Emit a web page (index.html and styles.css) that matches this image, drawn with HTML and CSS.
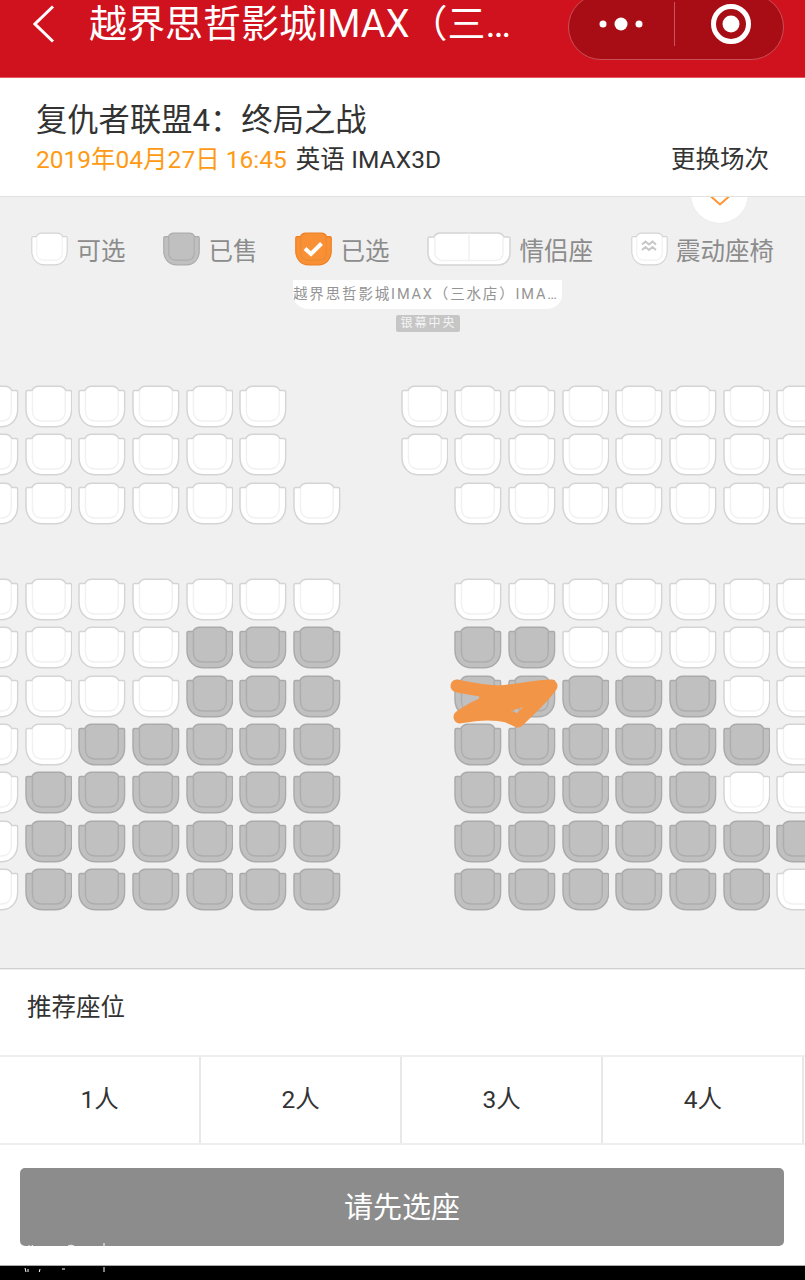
FILE: index.html
```html
<!DOCTYPE html>
<html lang="zh">
<head>
<meta charset="utf-8">
<title>选座</title>
<link rel="stylesheet" href="styles.css">
</head>
<body>
<svg class="defs" aria-hidden="true">
  <symbol id="s" viewBox="0 0 48 43">
    <path class="o" d="M2.5 5.5H7C8 2.8 10 1 14 1H34C38 1 40 2.8 41 5.5H45.5Q47 5.5 47 7V24C47 35 40 42 30 42H18C8 42 1 35 1 24V7Q1 5.5 2.5 5.5Z"/>
    <path class="n" d="M7.5 6V26C7.5 32 11 36 17 36H31C37 36 40.5 32 40.5 26V6"/>
  </symbol>
  <symbol id="c" viewBox="0 0 84 34">
    <path class="o" d="M2.5 5H7C8 2.5 10 1 14 1H70C74 1 76 2.5 77 5H81.5Q83 5 83 6.500V21C83 28 78 33 71 33H13C6 33 1 28 1 21V6.500Q1 5 2.500 5Z"/>
    <path class="n" d="M8 6V21C8 25 11 28.500 15 28.500H69C73 28.500 76 25 76 21V6M42 1V28.500"/>
  </symbol>
</svg>

<div class="page">
  <header class="bar">
    <svg class="back" viewBox="0 0 22 38"><path d="M20 1.500 2 19l18 17.500"/></svg>
    <h1 class="bar-title">越界思哲影城IMAX（三…</h1>
    <div class="capsule">
      <div class="cap-cell">
        <svg class="dots" viewBox="0 0 44 14"><circle cx="4" cy="7" r="3.500"/><circle cx="22" cy="7" r="6.500"/><circle cx="40" cy="7" r="3.500"/></svg>
      </div>
      <div class="cap-cell cap-right">
        <svg class="target" viewBox="0 0 40 40"><circle class="ring" cx="20" cy="20" r="17.500"/><circle class="bull" cx="20" cy="20" r="8.500"/></svg>
      </div>
    </div>
  </header>

  <section class="info">
    <h2 class="movie">复仇者联盟4：终局之战</h2>
    <div class="meta">
      <p class="meta-text"><span class="time">2019年04月27日 16:45</span><span class="lang">英语 IMAX3D</span></p>
      <span class="change">更换场次</span>
    </div>
  </section>

  <main class="hall">
    <div class="tab"><svg class="tab-arrow" viewBox="0 0 22 11"><path d="M1.500 1 11 9.500 20.500 1"/></svg></div>
    <div class="legend">
      <div class="lg"><svg class="lg-icon w"><use href="#s"/></svg>可选</div>
      <div class="lg"><svg class="lg-icon g"><use href="#s"/></svg>已售</div>
      <div class="lg"><svg class="lg-icon p"><use href="#s"/><path class="tick" d="M10 16.500 16 22 26.500 11.500"/></svg>已选</div>
      <div class="lg"><svg class="lg-wide w"><use href="#c"/></svg>情侣座</div>
      <div class="lg lg-last"><svg class="lg-icon w"><use href="#s"/><path class="wave" d="M11 12.500l3.500-3 3.500 3 3.500-3 3.500 3M11 18l3.500-3 3.500 3 3.500-3 3.500 3"/></svg>震动座椅</div>
    </div>
    <div class="screen">越界思哲影城IMAX（三水店）IMA…</div>
    <div class="center"><span class="center-tag">银幕中央</span></div>

    <div class="map">
      <div class="row"><svg class="seat w"><use href="#s"/></svg><svg class="seat w"><use href="#s"/></svg><svg class="seat w"><use href="#s"/></svg><svg class="seat w"><use href="#s"/></svg><svg class="seat w"><use href="#s"/></svg><svg class="seat w"><use href="#s"/></svg><i class="seat"></i><i class="seat"></i><svg class="seat w"><use href="#s"/></svg><svg class="seat w"><use href="#s"/></svg><svg class="seat w"><use href="#s"/></svg><svg class="seat w"><use href="#s"/></svg><svg class="seat w"><use href="#s"/></svg><svg class="seat w"><use href="#s"/></svg><svg class="seat w"><use href="#s"/></svg><svg class="seat w"><use href="#s"/></svg></div>
      <div class="row"><svg class="seat w"><use href="#s"/></svg><svg class="seat w"><use href="#s"/></svg><svg class="seat w"><use href="#s"/></svg><svg class="seat w"><use href="#s"/></svg><svg class="seat w"><use href="#s"/></svg><svg class="seat w"><use href="#s"/></svg><i class="seat"></i><i class="seat"></i><svg class="seat w"><use href="#s"/></svg><svg class="seat w"><use href="#s"/></svg><svg class="seat w"><use href="#s"/></svg><svg class="seat w"><use href="#s"/></svg><svg class="seat w"><use href="#s"/></svg><svg class="seat w"><use href="#s"/></svg><svg class="seat w"><use href="#s"/></svg><svg class="seat w"><use href="#s"/></svg></div>
      <div class="row"><svg class="seat w"><use href="#s"/></svg><svg class="seat w"><use href="#s"/></svg><svg class="seat w"><use href="#s"/></svg><svg class="seat w"><use href="#s"/></svg><svg class="seat w"><use href="#s"/></svg><svg class="seat w"><use href="#s"/></svg><svg class="seat w"><use href="#s"/></svg><i class="seat"></i><i class="seat"></i><svg class="seat w"><use href="#s"/></svg><svg class="seat w"><use href="#s"/></svg><svg class="seat w"><use href="#s"/></svg><svg class="seat w"><use href="#s"/></svg><svg class="seat w"><use href="#s"/></svg><svg class="seat w"><use href="#s"/></svg><svg class="seat w"><use href="#s"/></svg></div>
      <div class="row"></div>
      <div class="row"><svg class="seat w"><use href="#s"/></svg><svg class="seat w"><use href="#s"/></svg><svg class="seat w"><use href="#s"/></svg><svg class="seat w"><use href="#s"/></svg><svg class="seat w"><use href="#s"/></svg><svg class="seat w"><use href="#s"/></svg><svg class="seat w"><use href="#s"/></svg><i class="seat"></i><i class="seat"></i><svg class="seat w"><use href="#s"/></svg><svg class="seat w"><use href="#s"/></svg><svg class="seat w"><use href="#s"/></svg><svg class="seat w"><use href="#s"/></svg><svg class="seat w"><use href="#s"/></svg><svg class="seat w"><use href="#s"/></svg><svg class="seat w"><use href="#s"/></svg></div>
      <div class="row"><svg class="seat w"><use href="#s"/></svg><svg class="seat w"><use href="#s"/></svg><svg class="seat w"><use href="#s"/></svg><svg class="seat w"><use href="#s"/></svg><svg class="seat g"><use href="#s"/></svg><svg class="seat g"><use href="#s"/></svg><svg class="seat g"><use href="#s"/></svg><i class="seat"></i><i class="seat"></i><svg class="seat g"><use href="#s"/></svg><svg class="seat g"><use href="#s"/></svg><svg class="seat w"><use href="#s"/></svg><svg class="seat w"><use href="#s"/></svg><svg class="seat w"><use href="#s"/></svg><svg class="seat w"><use href="#s"/></svg><svg class="seat w"><use href="#s"/></svg></div>
      <div class="row"><svg class="seat w"><use href="#s"/></svg><svg class="seat w"><use href="#s"/></svg><svg class="seat w"><use href="#s"/></svg><svg class="seat w"><use href="#s"/></svg><svg class="seat g"><use href="#s"/></svg><svg class="seat g"><use href="#s"/></svg><svg class="seat g"><use href="#s"/></svg><i class="seat"></i><i class="seat"></i><svg class="seat g"><use href="#s"/></svg><svg class="seat g"><use href="#s"/></svg><svg class="seat g"><use href="#s"/></svg><svg class="seat g"><use href="#s"/></svg><svg class="seat g"><use href="#s"/></svg><svg class="seat w"><use href="#s"/></svg><svg class="seat w"><use href="#s"/></svg></div>
      <div class="row"><svg class="seat w"><use href="#s"/></svg><svg class="seat w"><use href="#s"/></svg><svg class="seat g"><use href="#s"/></svg><svg class="seat g"><use href="#s"/></svg><svg class="seat g"><use href="#s"/></svg><svg class="seat g"><use href="#s"/></svg><svg class="seat g"><use href="#s"/></svg><i class="seat"></i><i class="seat"></i><svg class="seat g"><use href="#s"/></svg><svg class="seat g"><use href="#s"/></svg><svg class="seat g"><use href="#s"/></svg><svg class="seat g"><use href="#s"/></svg><svg class="seat g"><use href="#s"/></svg><svg class="seat g"><use href="#s"/></svg><svg class="seat w"><use href="#s"/></svg></div>
      <div class="row"><svg class="seat w"><use href="#s"/></svg><svg class="seat g"><use href="#s"/></svg><svg class="seat g"><use href="#s"/></svg><svg class="seat g"><use href="#s"/></svg><svg class="seat g"><use href="#s"/></svg><svg class="seat g"><use href="#s"/></svg><svg class="seat g"><use href="#s"/></svg><i class="seat"></i><i class="seat"></i><svg class="seat g"><use href="#s"/></svg><svg class="seat g"><use href="#s"/></svg><svg class="seat g"><use href="#s"/></svg><svg class="seat g"><use href="#s"/></svg><svg class="seat g"><use href="#s"/></svg><svg class="seat w"><use href="#s"/></svg><svg class="seat w"><use href="#s"/></svg></div>
      <div class="row"><svg class="seat w"><use href="#s"/></svg><svg class="seat g"><use href="#s"/></svg><svg class="seat g"><use href="#s"/></svg><svg class="seat g"><use href="#s"/></svg><svg class="seat g"><use href="#s"/></svg><svg class="seat g"><use href="#s"/></svg><svg class="seat g"><use href="#s"/></svg><i class="seat"></i><i class="seat"></i><svg class="seat g"><use href="#s"/></svg><svg class="seat g"><use href="#s"/></svg><svg class="seat g"><use href="#s"/></svg><svg class="seat g"><use href="#s"/></svg><svg class="seat g"><use href="#s"/></svg><svg class="seat g"><use href="#s"/></svg><svg class="seat g"><use href="#s"/></svg></div>
      <div class="row"><svg class="seat w"><use href="#s"/></svg><svg class="seat g"><use href="#s"/></svg><svg class="seat g"><use href="#s"/></svg><svg class="seat g"><use href="#s"/></svg><svg class="seat g"><use href="#s"/></svg><svg class="seat g"><use href="#s"/></svg><svg class="seat g"><use href="#s"/></svg><i class="seat"></i><i class="seat"></i><svg class="seat g"><use href="#s"/></svg><svg class="seat g"><use href="#s"/></svg><svg class="seat g"><use href="#s"/></svg><svg class="seat g"><use href="#s"/></svg><svg class="seat g"><use href="#s"/></svg><svg class="seat g"><use href="#s"/></svg><svg class="seat w"><use href="#s"/></svg></div>
    </div>
    <svg class="scribble" viewBox="0 0 120 60"><path class="scribble-fill" d="M32 16 100 12 80 30 60 36 32 33Z"/><path d="M10 10C30 14 50 17 62 15 78 13 92 10 104 10 96 22 84 32 71 45L60 40C44 36 28 38 13 41 22 34 34 28 50 22"/></svg>
  </main>

  <section class="rec">
    <div class="rec-head">推荐座位</div>
    <div class="rec-grid">
      <div class="rec-cell">1人</div>
      <div class="rec-cell">2人</div>
      <div class="rec-cell">3人</div>
      <div class="rec-cell">4人</div>
    </div>
  </section>

  <footer class="foot">
    <div class="cta">请先选座</div>
    <svg class="marks" viewBox="0 0 100 30"><path d="M9 3v3M12 3l2 4M48 4c2-1 4-1 6 0M84 1v6M5 26l1 4M8 27v3M20 27l-1 4M42 27h3M84 25v6"/></svg>
  </footer>
  <div class="nav"></div>
</div>
</body>
</html>
```
FILE: styles.css
```css
* { box-sizing: border-box; }
html, body { margin: 0; padding: 0; }
body {
  width: 805px;
  height: 1280px;
  overflow: hidden;
  background: #000;
  font-family: Roboto, "Noto Sans CJK SC", sans-serif;
  color: #333;
}
h1, h2, p { margin: 0; font-weight: 400; }
.defs { position: absolute; width: 0; height: 0; }

.page { display: flex; flex-direction: column; width: 805px; height: 1280px; overflow: hidden; }

.bar {
  flex: 0 0 78px;
  display: flex;
  align-items: flex-start;
  background: #d0111e;
  border-bottom: 1px solid #e8565f;
}
.back {
  flex: 0 0 22px;
  width: 22px;
  height: 38px;
  margin: 5px 0 0 33px;
  fill: none;
  stroke: #fff;
  stroke-width: 3;
}
.bar-title {
  margin-left: 34px;
  font-size: 38px;
  line-height: 48px;
  color: #fff;
  white-space: nowrap;
}
.capsule {
  display: flex;
  width: 216px;
  height: 66px;
  margin: -6px 21px 0 auto;
  background: #a80c14;
  border: 1px solid #c95058;
  border-radius: 34px;
}
.cap-cell { flex: 1; display: flex; align-items: center; justify-content: center; padding-bottom: 6px; }
.cap-right { position: relative; padding-left: 6px; }
.cap-right::before {
  content: "";
  position: absolute;
  left: 1px;
  top: 7px;
  bottom: 13px;
  width: 1px;
  background: #c9545b;
}
.dots { width: 44px; height: 14px; fill: #fff; }
.target { width: 40px; height: 40px; }
.ring { fill: none; stroke: #fff; stroke-width: 5; }
.bull { fill: #fff; }

.info {
  flex: 0 0 119px;
  padding: 23px 36px 0;
  background: #fff;
  border-bottom: 1px solid #e2e2e2;
}
.movie { font-size: 31.300px; line-height: 40px; color: #333; white-space: nowrap; }
.meta {
  display: flex;
  justify-content: space-between;
  align-items: center;
  font-size: 24.5px;
  line-height: 38px;
}
.time { color: #ff9a14; }
.lang { margin-left: 9px; letter-spacing: 0.1px; }

.hall {
  position: relative;
  flex: 0 0 771px;
  background: #f0f0f0;
  overflow: hidden;
}
.tab {
  position: absolute;
  left: 691px;
  top: -31px;
  width: 57px;
  height: 57px;
  display: flex;
  align-items: flex-end;
  justify-content: center;
  padding-bottom: 17px;
  background: #fff;
  border-radius: 50%;
  box-shadow: 0 0 1px #d8d8d8;
}
.tab-arrow { width: 22px; height: 11px; fill: none; stroke: #ff9431; stroke-width: 2; }

.legend {
  display: flex;
  padding: 35px 0 0 31px;
  height: 68px;
  font-size: 24.5px;
  color: #8c8c8c;
}
.lg { display: flex; align-items: center; gap: 8.500px; margin-right: 37.500px; height: 34px; white-space: nowrap; }
.lg-last { margin-right: 0; }
.lg-icon { width: 37px; height: 34px; }
.lg-wide { width: 84px; height: 34px; }
.tick { fill: none; stroke: #fff; stroke-width: 4; }
.wave { fill: none; stroke: #c6c6c6; stroke-width: 2; }

.screen {
  width: 269px;
  height: 29px;
  margin: 15px 0 0 293px;
  background: #fff;
  border-radius: 0 0 16px 16px / 0 0 14px 14px;
  font-size: 14.5px;
  line-height: 30px;
  letter-spacing: 1.850px;
  color: #949494;
  white-space: nowrap;
  overflow: hidden;
}
.center { display: flex; justify-content: center; margin: 6px 0 0 25px; width: 805px; height: 17px; }
.center-tag {
  width: 64px;
  padding-left: 5px;
  background: #c6c6c6;
  border-radius: 2px;
  font-size: 12px;
  line-height: 17px;
  letter-spacing: 2px;
  color: #f4f4f4;
  white-space: nowrap;
}

.map { margin: 53px 0 0 -29px; width: 860px; }
.row { display: flex; height: 48.300px; }
.seat { flex: 0 0 47.700px; width: 47.700px; height: 43px; margin-right: 6px; display: block; }

.w { --f: #fff; --st: #d4d4d4; --in: #f1f1f1; }
.g { --f: #c0c0c0; --st: #aaaaaa; --in: #adadad; }
.p { --f: #f99036; --st: #ee7d1f; --in: #ea8a33; }
.o { fill: var(--f); stroke: var(--st); stroke-width: 1.500; }
.n { fill: none; stroke: var(--in); stroke-width: 1.500; }

.scribble {
  position: absolute;
  left: 447px;
  top: 479px;
  width: 120px;
  height: 60px;
  fill: none;
  stroke: #f39547;
  stroke-width: 13;
  stroke-linecap: round;
  stroke-linejoin: round;
}
.scribble-fill { fill: #f39547; stroke: none; }

.rec { flex: 0 0 177px; background: #fff; border-top: 1px solid #cfcfcf; }
.rec-head {
  height: 88px;
  padding: 0 0 0 27px;
  border-top: 1px solid #f0f0f0;
  border-bottom: 2px solid #eee;
  font-size: 24.500px;
  line-height: 75px;
}
.rec-grid { display: grid; grid-template-columns: repeat(4, 201.100px); height: 88px; border-bottom: 2px solid #eee; }
.rec-cell {
  display: flex;
  align-items: center;
  justify-content: center;
  padding-bottom: 5px;
  border-right: 2px solid #e8e8e8;
  font-size: 24.500px;
}

.foot { position: relative; flex: 0 0 121px; padding: 23px 21px 0 20px; background: #fff; border-bottom: 1px solid #aaa; }
.cta {
  height: 78px;
  background: #8c8c8c;
  border-radius: 5px;
  color: #fff;
  font-size: 29px;
  line-height: 80px;
  text-align: center;
}
.marks {
  position: absolute;
  left: 20px;
  top: 97px;
  width: 100px;
  height: 30px;
  fill: none;
  stroke: #fff;
  stroke-width: 1;
}
.nav { flex: 1; background: #000; }
```
